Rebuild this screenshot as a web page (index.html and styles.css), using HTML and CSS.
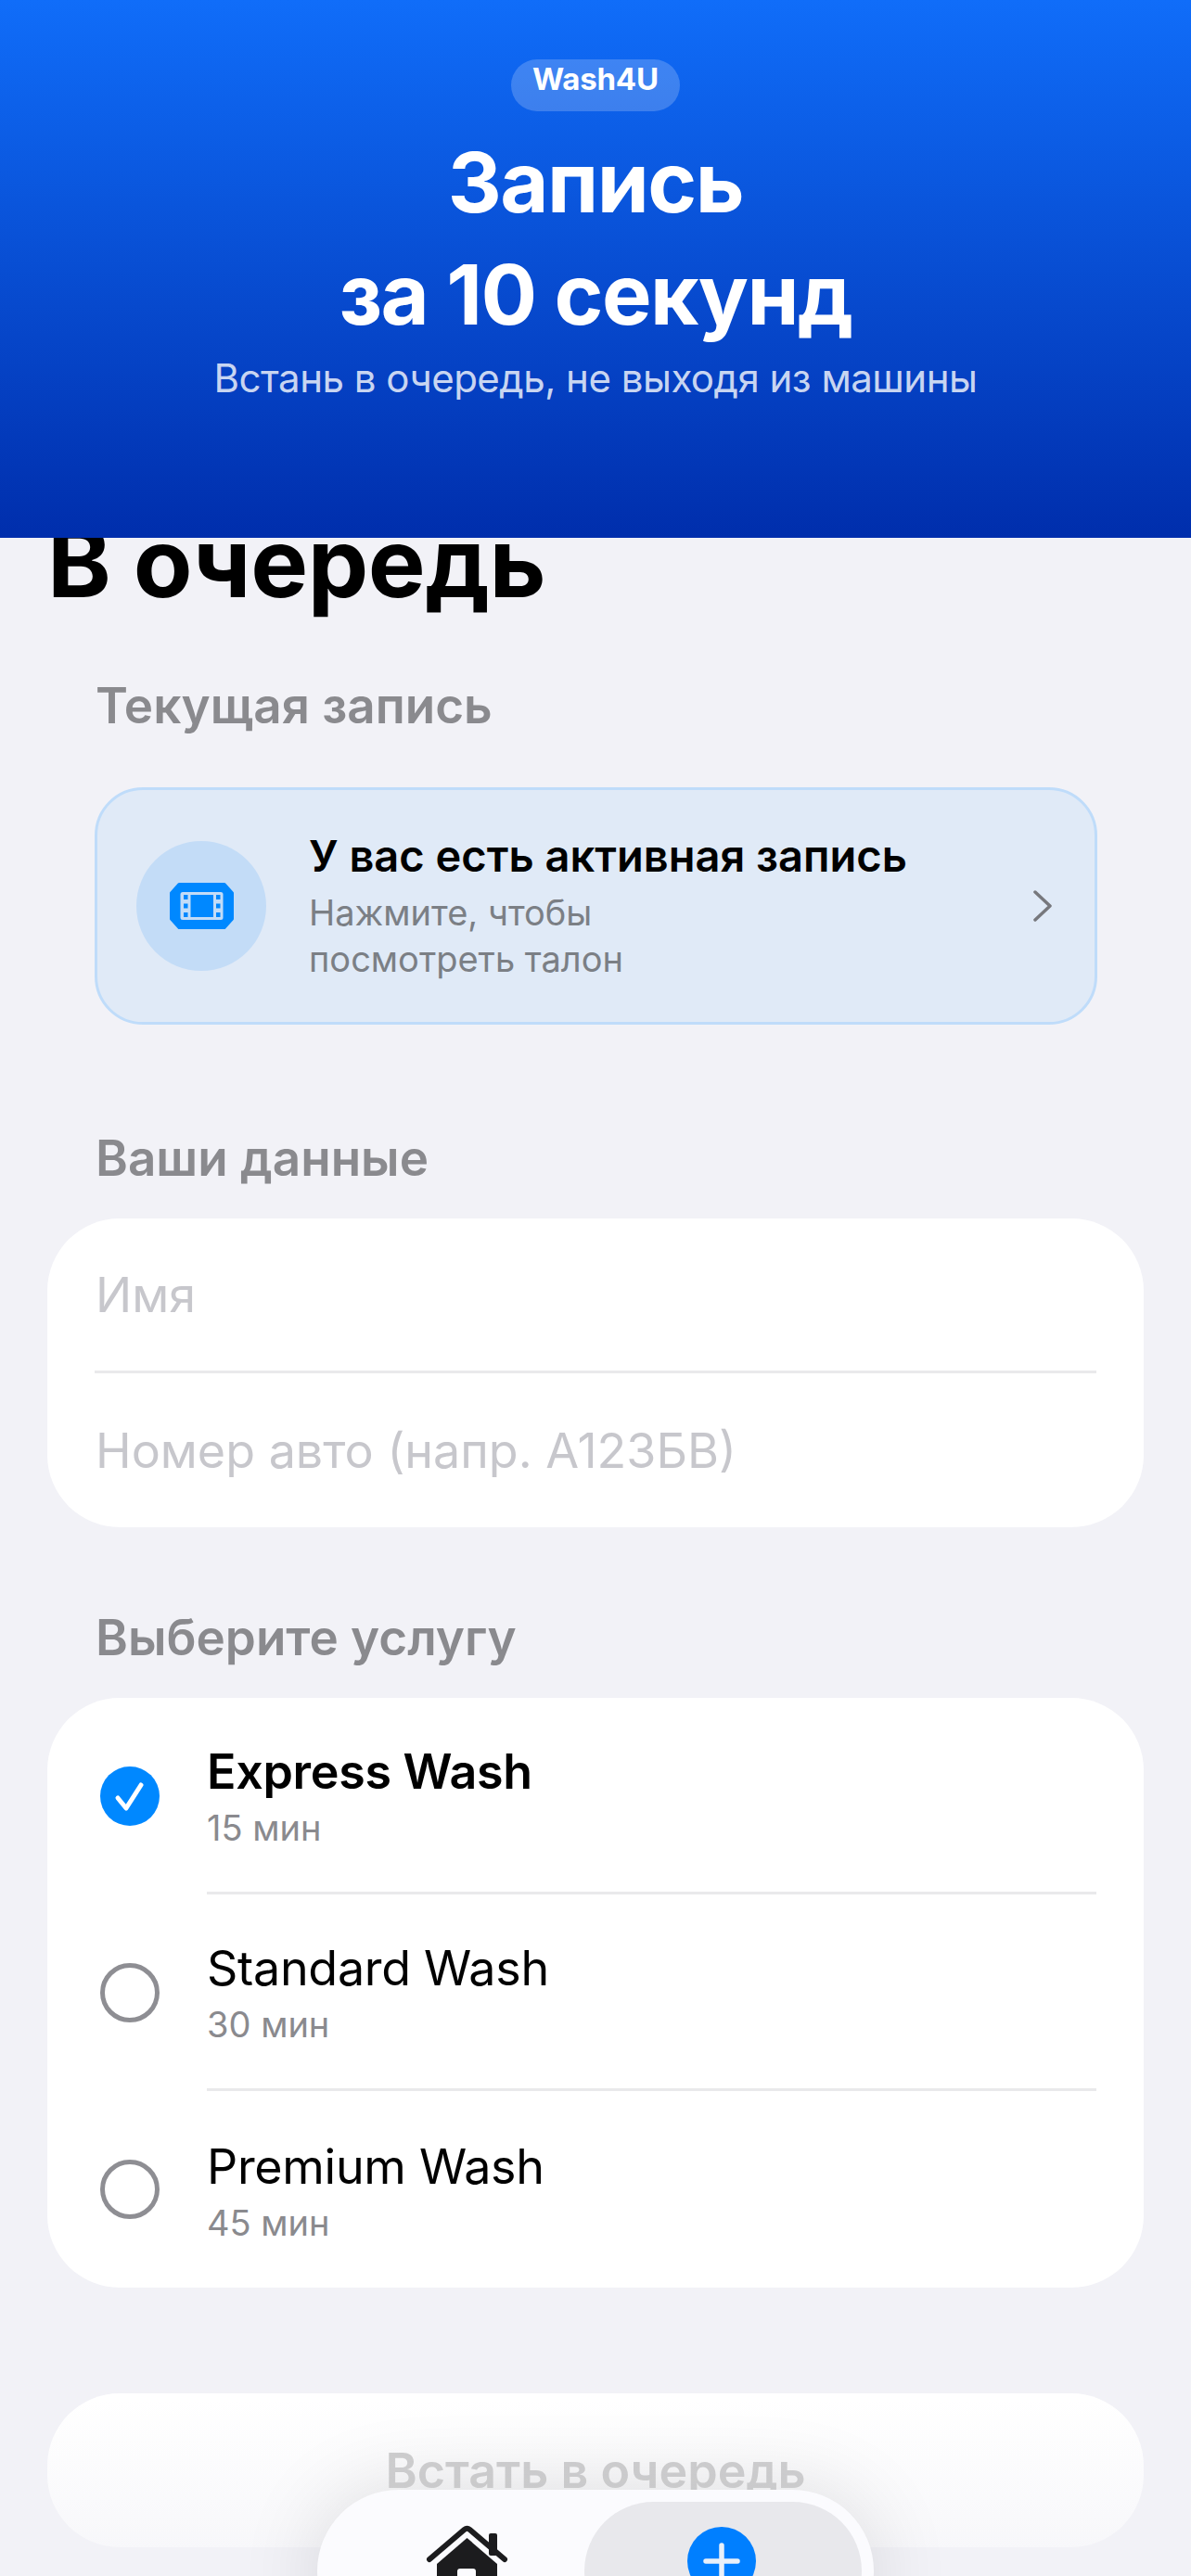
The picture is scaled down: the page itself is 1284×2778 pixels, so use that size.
FILE: index.html
```html
<!DOCTYPE html>
<html lang="ru">
<head>
    <meta charset="UTF-8">
    <meta name="viewport" content="width=device-width, initial-scale=1.0">
    <title>Wash4U</title>
    <link rel="stylesheet" href="styles.css">
</head>
<body>
    <div class="screen">
        <header class="hero">
            <span class="hero-badge">Wash4U</span>
            <h2 class="hero-title">Запись<br>за 10 секунд</h2>
            <p class="hero-subtitle">Встань в очередь, не выходя из машины</p>
        </header>

        <h1 class="page-title">В очередь</h1>

        <h3 class="section-label section-label-first">Текущая запись</h3>
        <div class="active-card">
            <div class="active-icon">
                <svg class="ticket-icon" viewBox="0 0 69 50" width="69" height="50">
                    <path class="ticket-body" d="M10 1.5H59L67.5 11V39L59 48.5H10L1.5 39V11Z"/>
                    <rect class="ticket-film" x="11.5" y="10" width="46" height="30" rx="2.5"/>
                    <rect class="ticket-hole" x="22.5" y="13" width="24.5" height="24"/>
                    <rect class="ticket-hole" x="15" y="13" width="4.5" height="5"/>
                    <rect class="ticket-hole" x="15" y="22.5" width="4.5" height="5"/>
                    <rect class="ticket-hole" x="15" y="32" width="4.5" height="5"/>
                    <rect class="ticket-hole" x="50" y="13" width="4.5" height="5"/>
                    <rect class="ticket-hole" x="50" y="22.5" width="4.5" height="5"/>
                    <rect class="ticket-hole" x="50" y="32" width="4.5" height="5"/>
                </svg>
            </div>
            <div class="active-text">
                <div class="active-title">У вас есть активная запись</div>
                <div class="active-subtitle">Нажмите, чтобы<br>посмотреть талон</div>
            </div>
            <svg class="chevron" viewBox="0 0 20 34" width="20" height="34">
                <path d="M2 2L18 17L2 32"/>
            </svg>
        </div>

        <h3 class="section-label section-label-data">Ваши данные</h3>
        <div class="group">
            <div class="field">Имя</div>
            <div class="field">Номер авто (напр. А123БВ)</div>
        </div>

        <h3 class="section-label section-label-service">Выберите услугу</h3>
        <div class="group">
            <div class="option selected">
                <svg class="radio" viewBox="0 0 64 64" width="64" height="64">
                    <circle class="radio-fill" cx="32" cy="32" r="32"/>
                    <path class="radio-check" d="M19 34L28 45L44 20"/>
                </svg>
                <div class="option-body">
                    <div class="option-name">Express Wash</div>
                    <div class="option-time">15 мин</div>
                </div>
            </div>
            <div class="option">
                <svg class="radio" viewBox="0 0 64 64" width="64" height="64">
                    <circle class="radio-ring" cx="32" cy="32" r="29.5"/>
                </svg>
                <div class="option-body">
                    <div class="option-name">Standard Wash</div>
                    <div class="option-time">30 мин</div>
                </div>
            </div>
            <div class="option">
                <svg class="radio" viewBox="0 0 64 64" width="64" height="64">
                    <circle class="radio-ring" cx="32" cy="32" r="29.5"/>
                </svg>
                <div class="option-body">
                    <div class="option-name">Premium Wash</div>
                    <div class="option-time">45 мин</div>
                </div>
            </div>
        </div>

        <button class="submit-button">Встать в очередь</button>

        <div class="bottom-fade"></div>

        <nav class="tab-bar">
            <div class="tab tab-home">
                <svg viewBox="0 0 100 100" width="100" height="100">
                    <rect class="home-fill" x="74" y="12" width="9" height="24" rx="2"/>
                    <path class="home-roof" d="M10 40L47.5 8Q50.5 5.5 53.5 8L91 40"/>
                    <path class="home-fill" d="M50.5 17L83 45V100H18V45Z"/>
                    <rect class="home-door" x="40" y="50" width="20" height="40" rx="3"/>
                </svg>
            </div>
            <div class="tab tab-active">
                <svg viewBox="0 0 74 74" width="74" height="74">
                    <circle class="plus-circle" cx="37" cy="37" r="37"/>
                    <path class="plus-mark" d="M37 20V54M20 37H54"/>
                </svg>
            </div>
        </nav>
    </div>
</body>
</html>
```

FILE: styles.css
```css
* {
    margin: 0;
    padding: 0;
    box-sizing: border-box;
    font-family: Inter, "Noto Sans", sans-serif;
}

body {
    background-color: #f2f2f7;
}

.screen {
    position: relative;
    height: 100vh;
    overflow: hidden;
}

/* hero */
.hero {
    position: relative;
    z-index: 2;
    height: 580px;
    padding-top: 64px;
    display: flex;
    flex-direction: column;
    align-items: center;
    background: linear-gradient(180deg, #106df9 0%, #002eac 100%);
    color: white;
}

.hero-badge {
    height: 56px;
    padding: 2px 23px 0;
    margin-bottom: 16px;
    border-radius: 28px;
    background-color: rgba(255, 255, 255, 0.2);
    font-size: 33px;
    line-height: 39px;
    font-weight: 700;
    letter-spacing: -0.2px;
}

.hero-title {
    font-size: 90px;
    line-height: 121px;
    font-weight: 700;
    text-align: center;
    letter-spacing: -1.5px;
}

.hero-subtitle {
    margin-top: 5px;
    font-size: 42px;
    line-height: 50px;
    color: rgba(255, 255, 255, 0.8);
    letter-spacing: -0.5px;
}

.page-title {
    margin: -31px 0 0 51px;
    font-size: 104px;
    line-height: 115px;
    font-weight: 700;
    color: black;
    letter-spacing: -0.4px;
}

.section-label {
    margin: 0 0 34px 103px;
    font-size: 53px;
    line-height: 62px;
    font-weight: 600;
    color: #8a8a8e;
}

.section-label-first {
    margin-top: 66px;
    margin-bottom: 57px;
}

.section-label-data {
    margin-top: 113px;
}

.section-label-service {
    margin-top: 88px;
}

/* active ticket card */
.active-card {
    display: flex;
    align-items: center;
    height: 256px;
    margin: 0 101px 0 102px;
    padding: 0 46px 0 42px;
    border: 3px solid #bfdcfa;
    border-radius: 52px;
    background-color: #e0eaf7;
}

.active-icon {
    width: 140px;
    height: 140px;
    flex-shrink: 0;
    display: flex;
    align-items: center;
    justify-content: center;
    border-radius: 50%;
    background-color: #c3dcf7;
}

.ticket-body {
    fill: #0088ff;
    stroke: #0088ff;
    stroke-width: 3;
    stroke-linejoin: round;
}

.ticket-film {
    fill: #c3dcf7;
}

.ticket-hole {
    fill: #0088ff;
}

.active-text {
    flex: 1;
    margin-left: 46px;
}

.active-title {
    font-size: 47px;
    line-height: 56px;
    font-weight: 600;
    color: black;
}

.active-subtitle {
    margin-top: 8px;
    font-size: 38px;
    line-height: 50px;
    color: #7b7f85;
}

.chevron path {
    fill: none;
    stroke: #77787d;
    stroke-width: 3.5;
    stroke-linecap: round;
    stroke-linejoin: round;
}

/* white groups */
.group {
    margin: 0 51px;
    border-radius: 78px;
    background-color: white;
}

.field {
    display: flex;
    align-items: center;
    height: 166px;
    margin: 0 51px;
    padding-left: 1px;
    font-size: 52px;
    color: #c7c7cc;
}

.field:first-child {
    height: 167px;
    border-bottom: 3px solid #e9e9eb;
}

.option {
    display: flex;
    align-items: center;
    height: 212px;
}

.radio {
    flex-shrink: 0;
    margin: 0 51px 0 57px;
}

.radio-fill {
    fill: #0088ff;
}

.radio-check {
    fill: none;
    stroke: white;
    stroke-width: 5;
    stroke-linecap: round;
    stroke-linejoin: round;
}

.radio-ring {
    fill: none;
    stroke: #8e8e93;
    stroke-width: 5;
}

.option-body {
    flex: 1;
    height: 100%;
    margin-right: 51px;
    padding-top: 3px;
    display: flex;
    flex-direction: column;
    justify-content: center;
    border-bottom: 3px solid #e9e9eb;
}

.option:last-child .option-body {
    border-bottom: none;
}

.option-name {
    font-size: 52px;
    line-height: 62px;
    color: black;
    letter-spacing: -0.3px;
}

.selected .option-name {
    font-weight: 600;
}

.option-time {
    margin-top: 7px;
    font-size: 38px;
    line-height: 45px;
    color: #8a8a8e;
}

.submit-button {
    display: block;
    width: 1182px;
    height: 166px;
    margin: 114px 0 0 51px;
    border: none;
    border-radius: 78px;
    background-color: white;
    font-size: 52px;
    font-weight: 600;
    color: #c7c7c7;
}

/* bottom overlay */
.bottom-fade {
    position: absolute;
    left: 0;
    right: 0;
    bottom: 0;
    height: 190px;
    background: linear-gradient(180deg, rgba(242, 242, 247, 0) 0%, rgba(242, 242, 247, 0.7) 100%);
}

.tab-bar {
    position: absolute;
    left: 342px;
    bottom: -82px;
    display: flex;
    width: 600px;
    height: 175px;
    padding: 13px 13px 13px 0;
    border-radius: 110px;
    background-color: #fbfbfe;
    box-shadow: 0 0 90px rgba(0, 0, 0, 0.12);
}

.tab {
    display: flex;
    justify-content: center;
}

.tab-home {
    flex: 1;
    padding: 22px 0 0 34px;
}

.tab-active {
    width: 299px;
    padding: 27px 3px 0 0;
    border-radius: 100px;
    background-color: #e8e8ec;
}

.home-fill {
    fill: #1c1c1e;
}

.home-roof {
    fill: none;
    stroke: #1c1c1e;
    stroke-width: 6;
    stroke-linecap: round;
    stroke-linejoin: round;
}

.home-door {
    fill: #fbfbfe;
}

.plus-circle {
    fill: #007fff;
}

.plus-mark {
    fill: none;
    stroke: #e8f0fa;
    stroke-width: 5.5;
    stroke-linecap: round;
}
```
